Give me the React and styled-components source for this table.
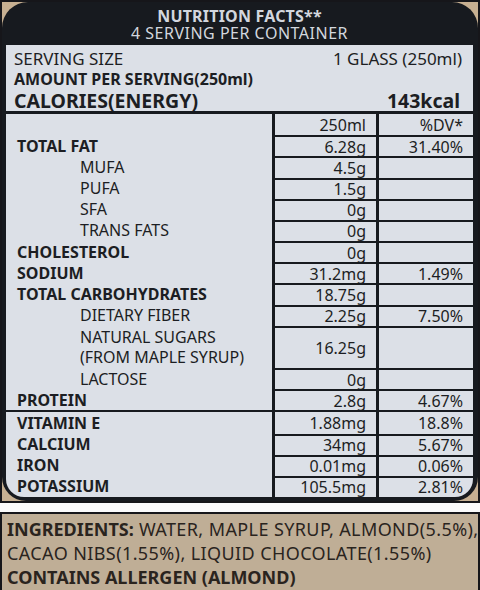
import React from 'react'
import styled, { createGlobalStyle, css } from 'styled-components'

const ink = '#1c1e23'
const panel = '#dce0e7'
const dark = '#171a1f'

const GlobalStyle = createGlobalStyle`
  html, body {
    margin: 0;
    padding: 0;
    background: #fbfbfb;
  }
  body {
    font-family: 'Noto Sans', 'DejaVu Sans', sans-serif;
    width: 480px;
    height: 590px;
    overflow: hidden;
  }
`

const Frame = styled.div`
  box-sizing: border-box;
  height: 503px;
  border: 2px solid #16161a;
  background: #c7b092;
  display: flex;
`

const Label = styled.div`
  flex: 1;
  display: flex;
  flex-direction: column;
  background: ${dark};
  border-radius: 26px 26px 24px 24px;
  padding: 0 5px 4px 4px;
`

const Masthead = styled.header`
  height: 43px;
  padding-top: 6px;
  box-sizing: border-box;
  text-align: center;
  color: #d3d7de;
`

const Title = styled.div`
  font-size: 16px;
  line-height: 17px;
  font-weight: 700;
  letter-spacing: 0.2px;
`

const Subtitle = styled.div`
  font-size: 16px;
  line-height: 17px;
  letter-spacing: 0.5px;
`

const Sheet = styled.div`
  flex: 1;
  display: flex;
  flex-direction: column;
  background: ${panel};
  border-radius: 0 0 18px 18px;
  overflow: hidden;
  color: ${ink};
`

const Summary = styled.div`
  display: flex;
  justify-content: space-between;
  align-items: center;
  padding: ${({ $top }) => $top || 0}px ${({ $right }) => $right || 11}px 0 8px;
  height: ${({ $h }) => $h}px;
  line-height: ${({ $h }) => $h}px;
  font-size: ${({ $size }) => $size || 16}px;
  font-weight: ${({ $bold }) => ($bold ? 700 : 400)};
  white-space: nowrap;
`

const Table = styled.div`
  flex: 1;
  display: flex;
  flex-direction: column;
  border-top: 3px solid ${dark};
`

const Row = styled.div`
  display: grid;
  grid-template-columns: 266px 104px 1fr;
  flex: ${({ $span }) => $span || 1} 1 0;
  min-height: 0;
  ${({ $divider }) =>
    $divider &&
    css`
      border-top: 2px solid ${dark};
    `}
`

const Name = styled.div`
  display: flex;
  flex-direction: column;
  justify-content: center;
  padding-left: ${({ $indent }) => ($indent ? 74 : 11)}px;
  font-size: 16px;
  line-height: 20px;
  font-weight: ${({ $indent }) => ($indent ? 400 : 700)};
  white-space: nowrap;
`

const Cell = styled.div`
  display: flex;
  align-items: center;
  justify-content: flex-end;
  padding-right: 10px;
  border-left: 3px solid ${dark};
  font-size: 16px;
  line-height: 18px;
  white-space: nowrap;
  ${({ $top }) =>
    $top &&
    css`
      border-top: 2px solid ${dark};
    `}
`

const Ingredients = styled.div`
  box-sizing: border-box;
  margin-top: 9px;
  height: 78px;
  border: 2px solid #16161a;
  border-bottom: none;
  background: #bfae96;
  color: #2a241e;
  padding: 3px 0 0 5px;
  font-size: 18px;
  line-height: 24px;
  letter-spacing: 0.4px;
  white-space: nowrap;
`

const Strong = styled.span`
  font-weight: 700;
  letter-spacing: 0;
`

const rows = [
  { name: 'TOTAL FAT', amount: '6.28g', dv: '31.40%' },
  { name: 'MUFA', indent: true, amount: '4.5g' },
  { name: 'PUFA', indent: true, amount: '1.5g' },
  { name: 'SFA', indent: true, amount: '0g' },
  { name: 'TRANS FATS', indent: true, amount: '0g' },
  { name: 'CHOLESTEROL', amount: '0g' },
  { name: 'SODIUM', amount: '31.2mg', dv: '1.49%' },
  { name: 'TOTAL CARBOHYDRATES', amount: '18.75g' },
  { name: 'DIETARY FIBER', indent: true, amount: '2.25g', dv: '7.50%' },
  {
    name: ['NATURAL SUGARS', '(FROM MAPLE SYRUP)'],
    indent: true,
    amount: '16.25g',
    span: 2,
  },
  { name: 'LACTOSE', indent: true, amount: '0g' },
  { name: 'PROTEIN', amount: '2.8g', dv: '4.67%' },
  { name: 'VITAMIN E', amount: '1.88mg', dv: '18.8%', divider: true },
  { name: 'CALCIUM', amount: '34mg', dv: '5.67%' },
  { name: 'IRON', amount: '0.01mg', dv: '0.06%' },
  { name: 'POTASSIUM', amount: '105.5mg', dv: '2.81%' },
]

const App = () => (
  <>
    <GlobalStyle />
    <Frame>
      <Label>
        <Masthead>
          <Title>NUTRITION FACTS**</Title>
          <Subtitle>4 SERVING PER CONTAINER</Subtitle>
        </Masthead>
        <Sheet>
          <Summary $h={21} $top={3} $size={17}>
            <span>SERVING SIZE</span>
            <span>1 GLASS (250ml)</span>
          </Summary>
          <Summary $h={20} $bold>
            <span>AMOUNT PER SERVING(250ml)</span>
          </Summary>
          <Summary $h={20} $top={2} $size={19.5} $bold $right={13}>
            <span>CALORIES(ENERGY)</span>
            <span>143kcal</span>
          </Summary>
          <Table>
            <Row>
              <Name />
              <Cell>250ml</Cell>
              <Cell>%DV*</Cell>
            </Row>
            {rows.map(row => (
              <Row key={[].concat(row.name).join()} $span={row.span} $divider={row.divider}>
                <Name $indent={row.indent}>
                  {[].concat(row.name).map(line => (
                    <span key={line}>{line}</span>
                  ))}
                </Name>
                <Cell $top={!row.divider}>{row.amount}</Cell>
                <Cell $top={!row.divider}>{row.dv}</Cell>
              </Row>
            ))}
          </Table>
        </Sheet>
      </Label>
    </Frame>
    <Ingredients>
      <Strong>INGREDIENTS:</Strong> WATER, MAPLE SYRUP, ALMOND(5.5%),
      <br />
      CACAO NIBS(1.55%), LIQUID CHOCOLATE(1.55%)
      <br />
      <Strong>CONTAINS ALLERGEN (ALMOND)</Strong>
    </Ingredients>
  </>
)

export default App
